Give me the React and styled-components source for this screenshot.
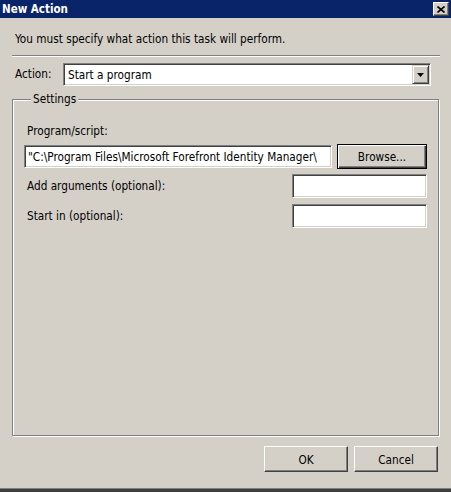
import React from 'react'
import styled, {createGlobalStyle} from 'styled-components'

const GlobalStyle = createGlobalStyle`
  html, body {
    margin: 0;
    padding: 0;
    background: #d4d0c8;
  }
`

const font = `"DejaVu Sans Condensed", "Liberation Sans", sans-serif`

const Window = styled.div`
  width: 451px;
  height: 492px;
  box-sizing: border-box;
  background: #d4d0c8;
  display: flex;
  flex-direction: column;
  font-family: ${font};
  font-size: 11.7px;
  color: #000;
  border-bottom: 3px solid #404040;
  box-shadow: inset 0 -1px 0 #808080;
`

const TitleBar = styled.div`
  height: 18px;
  flex-shrink: 0;
  background: #0a246a;
  color: #fff;
  font-weight: bold;
  font-size: 11.5px;
  display: flex;
  align-items: center;
  justify-content: space-between;
  padding: 0 2px 0 2px;
`

const CloseButton = styled.div`
  width: 14px;
  height: 12px;
  background: #d4d0c8;
  border: 1px solid;
  border-color: #fff #404040 #404040 #fff;
  box-shadow: inset -1px -1px 0 #808080;
  display: flex;
  align-items: center;
  justify-content: center;
`

const Body = styled.div`
  flex: 1;
  display: flex;
  flex-direction: column;
  padding: 0 11px 0 12px;
`

const Intro = styled.div`
  margin-top: 15px;
  padding-left: 3px;
  line-height: 13px;
`

const Separator = styled.div`
  margin-top: 9px;
  border-top: 1px solid #808080;
  border-bottom: 1px solid #fff;
  height: 0;
`

const ActionRow = styled.div`
  margin-top: 6px;
  display: flex;
  align-items: center;
  padding-left: 3px;
`

const Label = styled.div`
  width: ${p => p.$width || 'auto'};
  flex-shrink: 0;
  line-height: 13px;
  padding-left: ${p => p.$indent || 0}px;
`

const Sunken = styled.div`
  box-sizing: border-box;
  height: ${p => p.$height || 23}px;
  width: ${p => p.$width}px;
  background: #fff;
  border: 1px solid;
  border-color: #808080 #fff #fff #808080;
  box-shadow: inset 1px 1px 0 #404040, inset -1px -1px 0 #d4d0c8;
  display: flex;
  align-items: center;
  overflow: hidden;
  white-space: nowrap;
  padding-left: 3px;
`

const ComboText = styled.div`
  flex: 1;
  padding-left: 1px;
`

const DropButton = styled.div`
  box-sizing: border-box;
  width: 17px;
  height: 19px;
  margin-right: 1px;
  background: #d4d0c8;
  border: 1px solid;
  border-color: #d4d0c8 #404040 #404040 #d4d0c8;
  box-shadow: inset 1px 1px 0 #fff, inset -1px -1px 0 #808080;
  display: flex;
  align-items: center;
  justify-content: center;
`

const Group = styled.fieldset`
  flex: 1;
  margin: 7px 1px 0 0;
  padding: 0 11px 0 11px;
  border: 1px solid #808080;
  box-shadow: inset 1px 1px 0 #fff, 1px 1px 0 #fff;
  display: flex;
  flex-direction: column;
  min-width: 0;
`

const Legend = styled.legend`
  margin-left: 7px;
  padding: 0 2px;
  background: #d4d0c8;
  line-height: 13px;
`

const Row = styled.div`
  display: flex;
  align-items: center;
  justify-content: space-between;
  margin-top: ${p => p.$top}px;
`

const Button = styled.div`
  box-sizing: border-box;
  width: ${p => p.$width}px;
  height: ${p => p.$height || 25}px;
  background: #d4d0c8;
  border: 1px solid;
  border-color: ${p => (p.$default ? '#000' : '#fff #404040 #404040 #fff')};
  box-shadow: ${p =>
    p.$default
      ? 'inset 1px 1px 0 #fff, inset -1px -1px 0 #404040, inset -2px -2px 0 #808080'
      : 'inset -1px -1px 0 #808080'};
  display: flex;
  align-items: center;
  justify-content: center;
  padding-top: 1px;
`

const Footer = styled.div`
  display: flex;
  justify-content: flex-end;
  gap: 6px;
  margin: 10px 2px 17px 0;
`

const App = () => (
  <Window>
    <GlobalStyle />
    <TitleBar>
      <span>New Action</span>
      <CloseButton>
        <svg width="8" height="7" viewBox="0 0 8 7">
          <path d="M0.5 0.5 L7.5 6.5 M7.5 0.5 L0.5 6.5" stroke="#000" strokeWidth="1.6" />
        </svg>
      </CloseButton>
    </TitleBar>
    <Body>
      <Intro>You must specify what action this task will perform.</Intro>
      <Separator />
      <ActionRow>
        <Label $width="48px">Action:</Label>
        <Sunken $width={368}>
          <ComboText>Start a program</ComboText>
          <DropButton>
            <svg width="7" height="4" viewBox="0 0 7 4">
              <path d="M0 0 H7 L3.5 4 Z" fill="#000" />
            </svg>
          </DropButton>
        </Sunken>
      </ActionRow>
      <Group>
        <Legend>Settings</Legend>
        <Row $top={19}>
          <Label $indent={3}>Program/script:</Label>
        </Row>
        <Row $top={6}>
          <Sunken $width={308} $height={23}>
            "C:\Program Files\Microsoft Forefront Identity Manager\
          </Sunken>
          <Button $width={90} $default>Browse...</Button>
        </Row>
        <Row $top={5}>
          <Label $indent={3}>Add arguments (optional):</Label>
          <Sunken $width={135} $height={24} />
        </Row>
        <Row $top={6}>
          <Label $indent={3}>Start in (optional):</Label>
          <Sunken $width={135} $height={24} />
        </Row>
      </Group>
      <Footer>
        <Button $width={84} $height={26}>OK</Button>
        <Button $width={84} $height={26}>Cancel</Button>
      </Footer>
    </Body>
  </Window>
)

export default App
